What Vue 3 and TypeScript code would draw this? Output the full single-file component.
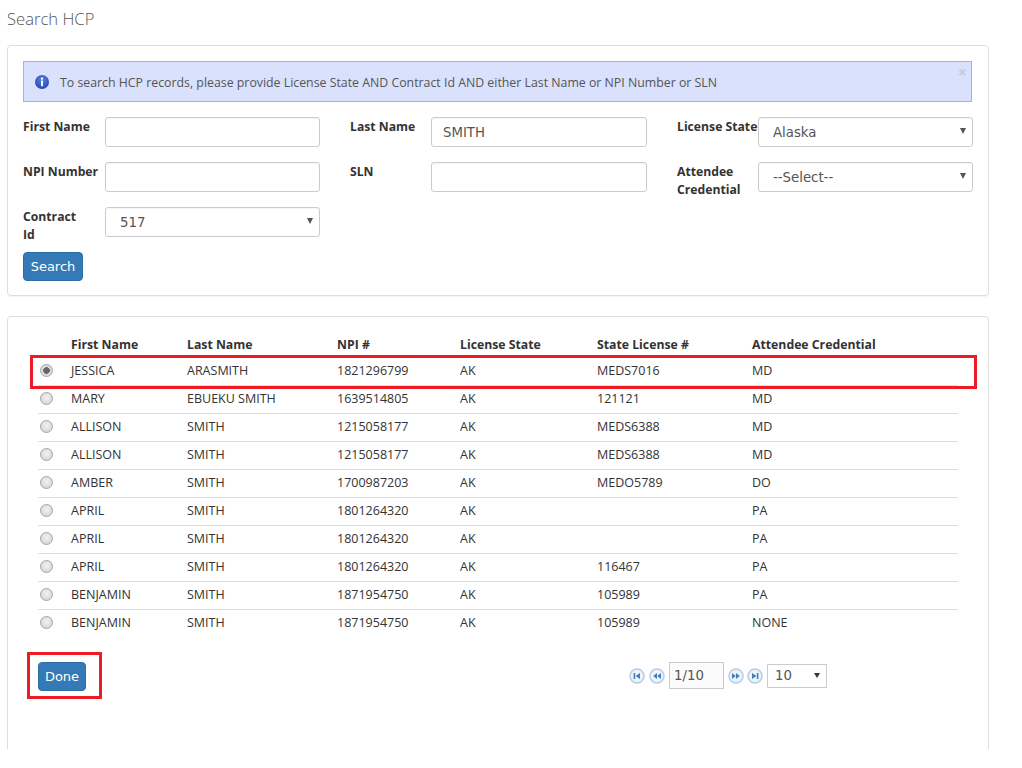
<script setup lang="ts">
interface Row { first: string; last: string; npi: string; state: string; license: string; cred: string; checked?: boolean }
const rows: Row[] = [
  { first: 'JESSICA', last: 'ARASMITH', npi: '1821296799', state: 'AK', license: 'MEDS7016', cred: 'MD', checked: true },
  { first: 'MARY', last: 'EBUEKU SMITH', npi: '1639514805', state: 'AK', license: '121121', cred: 'MD' },
  { first: 'ALLISON', last: 'SMITH', npi: '1215058177', state: 'AK', license: 'MEDS6388', cred: 'MD' },
  { first: 'ALLISON', last: 'SMITH', npi: '1215058177', state: 'AK', license: 'MEDS6388', cred: 'MD' },
  { first: 'AMBER', last: 'SMITH', npi: '1700987203', state: 'AK', license: 'MEDO5789', cred: 'DO' },
  { first: 'APRIL', last: 'SMITH', npi: '1801264320', state: 'AK', license: '', cred: 'PA' },
  { first: 'APRIL', last: 'SMITH', npi: '1801264320', state: 'AK', license: '', cred: 'PA' },
  { first: 'APRIL', last: 'SMITH', npi: '1801264320', state: 'AK', license: '116467', cred: 'PA' },
  { first: 'BENJAMIN', last: 'SMITH', npi: '1871954750', state: 'AK', license: '105989', cred: 'PA' },
  { first: 'BENJAMIN', last: 'SMITH', npi: '1871954750', state: 'AK', license: '105989', cred: 'NONE' },
]
const colWidths = [25, 116, 150, 123, 137, 155, 214]
</script>

<template>
  <div class="page">
    <h1 class="title">Search HCP</h1>

    <section class="panel search">
      <div class="alert">
        <svg class="info" width="14" height="14" viewBox="0 0 14 14">
          <defs>
            <radialGradient id="ig" cx="50%" cy="35%" r="65%">
              <stop offset="0" stop-color="#5f86e0" />
              <stop offset="1" stop-color="#2347b0" />
            </radialGradient>
          </defs>
          <circle cx="7" cy="7" r="7" fill="url(#ig)" />
          <rect x="6" y="2.6" width="2" height="2" fill="#fff" />
          <rect x="6" y="5.6" width="2" height="5.6" fill="#fff" />
        </svg>
        <span class="alert-text">To search HCP records, please provide License State AND Contract Id AND either Last Name or NPI Number or SLN</span>
        <span class="close">×</span>
      </div>

      <div class="form">
        <div class="field"><label>First Name</label><input class="ctl" type="text" /></div>
        <div class="field"><label>Last Name</label><input class="ctl" type="text" value="SMITH" /></div>
        <div class="field"><label>License State</label><div class="sel"><select class="ctl"><option>Alaska</option></select></div></div>
        <div class="field"><label>NPI Number</label><input class="ctl" type="text" /></div>
        <div class="field"><label>SLN</label><input class="ctl" type="text" /></div>
        <div class="field"><label>Attendee<br />Credential</label><div class="sel"><select class="ctl"><option>--Select--</option></select></div></div>
        <div class="field"><label>Contract<br />Id</label><div class="sel"><select class="ctl"><option>517</option></select></div></div>
      </div>
      <button class="btn search-btn" type="button">Search</button>
    </section>

    <section class="panel results">
      <table class="grid">
        <colgroup><col v-for="(w, i) in colWidths" :key="i" :style="{ width: w + 'px' }" /></colgroup>
        <thead>
          <tr><th></th><th>First Name</th><th>Last Name</th><th>NPI #</th><th>License State</th><th>State License #</th><th>Attendee Credential</th></tr>
        </thead>
        <tbody>
          <tr v-for="(r, i) in rows" :key="i">
            <td class="radio-cell"><span class="radio" :class="{ on: r.checked }"></span></td>
            <td>{{ r.first }}</td><td>{{ r.last }}</td><td>{{ r.npi }}</td><td>{{ r.state }}</td><td>{{ r.license }}</td><td>{{ r.cred }}</td>
          </tr>
        </tbody>
      </table>

      <div class="footer">
        <button class="btn done" type="button">Done</button>
        <div class="pager">
          <svg class="pg" width="16" height="16" viewBox="0 0 16 16"><circle cx="8" cy="8" r="7" fill="#eef3fa" stroke="#b9cde6" stroke-width="1.6" /><rect x="4.6" y="5" width="1.6" height="6" fill="#3f7fc4" /><path d="M11 5v6L6.6 8z" fill="#3f7fc4" /></svg>
          <svg class="pg" width="16" height="16" viewBox="0 0 16 16"><circle cx="8" cy="8" r="7" fill="#eef3fa" stroke="#b9cde6" stroke-width="1.6" /><path d="M8 5v6L4.2 8zM12 5v6L8.2 8z" fill="#3f7fc4" /></svg>
          <input class="page-input" type="text" value="1/10" />
          <svg class="pg next" width="16" height="16" viewBox="0 0 16 16"><circle cx="8" cy="8" r="7" fill="#eef3fa" stroke="#b9cde6" stroke-width="1.6" /><path d="M4 5v6l3.8-3zM8 5v6l3.8-3z" fill="#3f7fc4" /></svg>
          <svg class="pg" width="16" height="16" viewBox="0 0 16 16"><circle cx="8" cy="8" r="7" fill="#eef3fa" stroke="#b9cde6" stroke-width="1.6" /><path d="M5 5v6l4.4-3z" fill="#3f7fc4" /><rect x="9.8" y="5" width="1.6" height="6" fill="#3f7fc4" /></svg>
          <div class="sel small"><select class="page-select"><option>10</option></select></div>
        </div>
      </div>

      <div class="mark row-mark"></div>
      <div class="mark done-mark"></div>
    </section>
  </div>
</template>

<style>
html, body { margin: 0; background: #fff; }
</style>

<style scoped>
.page {
  height: 749px;
  overflow: hidden;
  padding: 0 33px 0 7px;
  font-family: "Open Sans", "Noto Sans", sans-serif;
  font-size: 12.5px;
  color: #333;
}
.title {
  margin: 0;
  height: 45px;
  padding-top: 7px;
  box-sizing: border-box;
  font-size: 16.6px;
  line-height: 24px;
  font-weight: 300;
  color: #555;
}
.panel {
  position: relative;
  border: 1px solid #ddd;
  border-radius: 4px;
  box-sizing: border-box;
  box-shadow: 0 1px 1px rgba(0, 0, 0, .05);
}
.search { height: 251px; padding: 15px; }
.alert {
  position: relative;
  display: flex;
  align-items: center;
  gap: 11px;
  box-sizing: border-box;
  width: 949px;
  height: 41px;
  padding: 0 11px;
  background: #d9e1fc;
  border: 1px solid #9fb3e6;
  color: #555;
  font-size: 12.33px;
}
.alert-text { padding-top: 2px; }
.close {
  position: absolute;
  right: 4px;
  top: 1px;
  font-size: 16px;
  font-weight: 700;
  line-height: 18px;
  color: #c6cbdb;
}
.form {
  display: grid;
  grid-template-columns: 297px 297px 296px;
  column-gap: 30px;
  row-gap: 15px;
  margin-top: 15px;
  width: 950px;
}
.field { display: flex; align-items: flex-start; height: 30px; }
.field label {
  flex: 0 0 81px;
  width: 81px;
  padding-top: 1px;
  font-weight: 700;
  font-size: 12.2px;
  line-height: 18px;
  color: #333;
  white-space: nowrap;
}
.field:nth-child(3n + 1) label { flex-basis: 82px; width: 82px; }
.field > .ctl, .field > .sel { flex: 1; min-width: 0; }
.ctl {
  display: block;
  width: 100%;
  height: 30px;
  box-sizing: border-box;
  padding: 0 11px;
  border: 1px solid #ccc;
  border-radius: 3px;
  background: #fff;
  font-family: "DejaVu Sans", sans-serif;
  font-size: 13.3px;
  color: #555;
  outline: none;
  box-shadow: inset 0 1px 1px rgba(0, 0, 0, .04);
}
.sel { position: relative; }
.sel select { appearance: none; -webkit-appearance: none; }
.sel .ctl { padding-left: 14px; }
.sel::after {
  content: "";
  position: absolute;
  right: 7px;
  top: 11px;
  border-left: 3px solid transparent;
  border-right: 3px solid transparent;
  border-top: 6px solid #555;
  pointer-events: none;
}
.btn {
  display: block;
  box-sizing: border-box;
  border: 1px solid #2e6da4;
  border-radius: 4px;
  background: #337ab7;
  color: #fff;
  font-family: "DejaVu Sans", sans-serif;
  font-size: 13px;
  padding: 0;
}
.search-btn { width: 60px; height: 29px; margin-top: 15px; }
.results { height: 500px; margin-top: 20px; padding: 13px 30px 0; }
.grid { width: 920px; table-layout: fixed; border-collapse: collapse; }
.grid th {
  height: 27px;
  padding: 1px 0 0 8px;
  box-sizing: border-box;
  text-align: left;
  font-size: 12.25px;
  font-weight: 700;
  color: #333;
}
.grid td {
  height: 28px;
  padding: 0 0 1px 8px;
  box-sizing: border-box;
  border-bottom: 1px solid #ddd;
}
.grid tr:last-child td { border-bottom: 0; }
.grid .radio-cell { padding: 0 0 1px; }
.radio {
  display: block;
  width: 13px;
  height: 13px;
  margin-left: 2px;
  box-sizing: border-box;
  border: 1px solid #a6a6a6;
  border-radius: 50%;
  background: radial-gradient(circle at 50% 40%, #f2f2f2, #cfcfcf);
}
.radio.on { background: radial-gradient(circle, #666 0 3px, #d8d8d8 3.6px, #e6e6e6); }
.footer { display: flex; align-items: flex-start; margin-top: 25px; }
.done { width: 48px; height: 29px; }
.pager { display: flex; align-items: center; margin-left: 543px; height: 27px; }
.pg { display: block; flex: none; margin-right: 4px; }
.pg.next { margin-left: 4px; margin-right: 3px; }
.page-input {
  box-sizing: border-box;
  width: 55px;
  height: 27px;
  padding: 0 4px;
  border: 1px solid #ccc;
  background: #fbfbfb;
  font-family: "DejaVu Sans", sans-serif;
  font-size: 13.3px;
  color: #555;
  outline: none;
}
.page-select {
  display: block;
  box-sizing: border-box;
  width: 60px;
  height: 24px;
  padding: 0 7px;
  border: 1px solid #ccc;
  border-radius: 0;
  background: #fff;
  font-family: "DejaVu Sans", sans-serif;
  font-size: 13.3px;
  color: #555;
  outline: none;
}
.sel.small::after { right: 7px; top: 9px; border-top: 5px solid #333; }
.mark { position: absolute; box-sizing: border-box; border: 3px solid #ed1c24; pointer-events: none; }
.row-mark { left: 22px; top: 38px; width: 947px; height: 34px; }
.done-mark { left: 19px; top: 335px; width: 75px; height: 47px; }
</style>
